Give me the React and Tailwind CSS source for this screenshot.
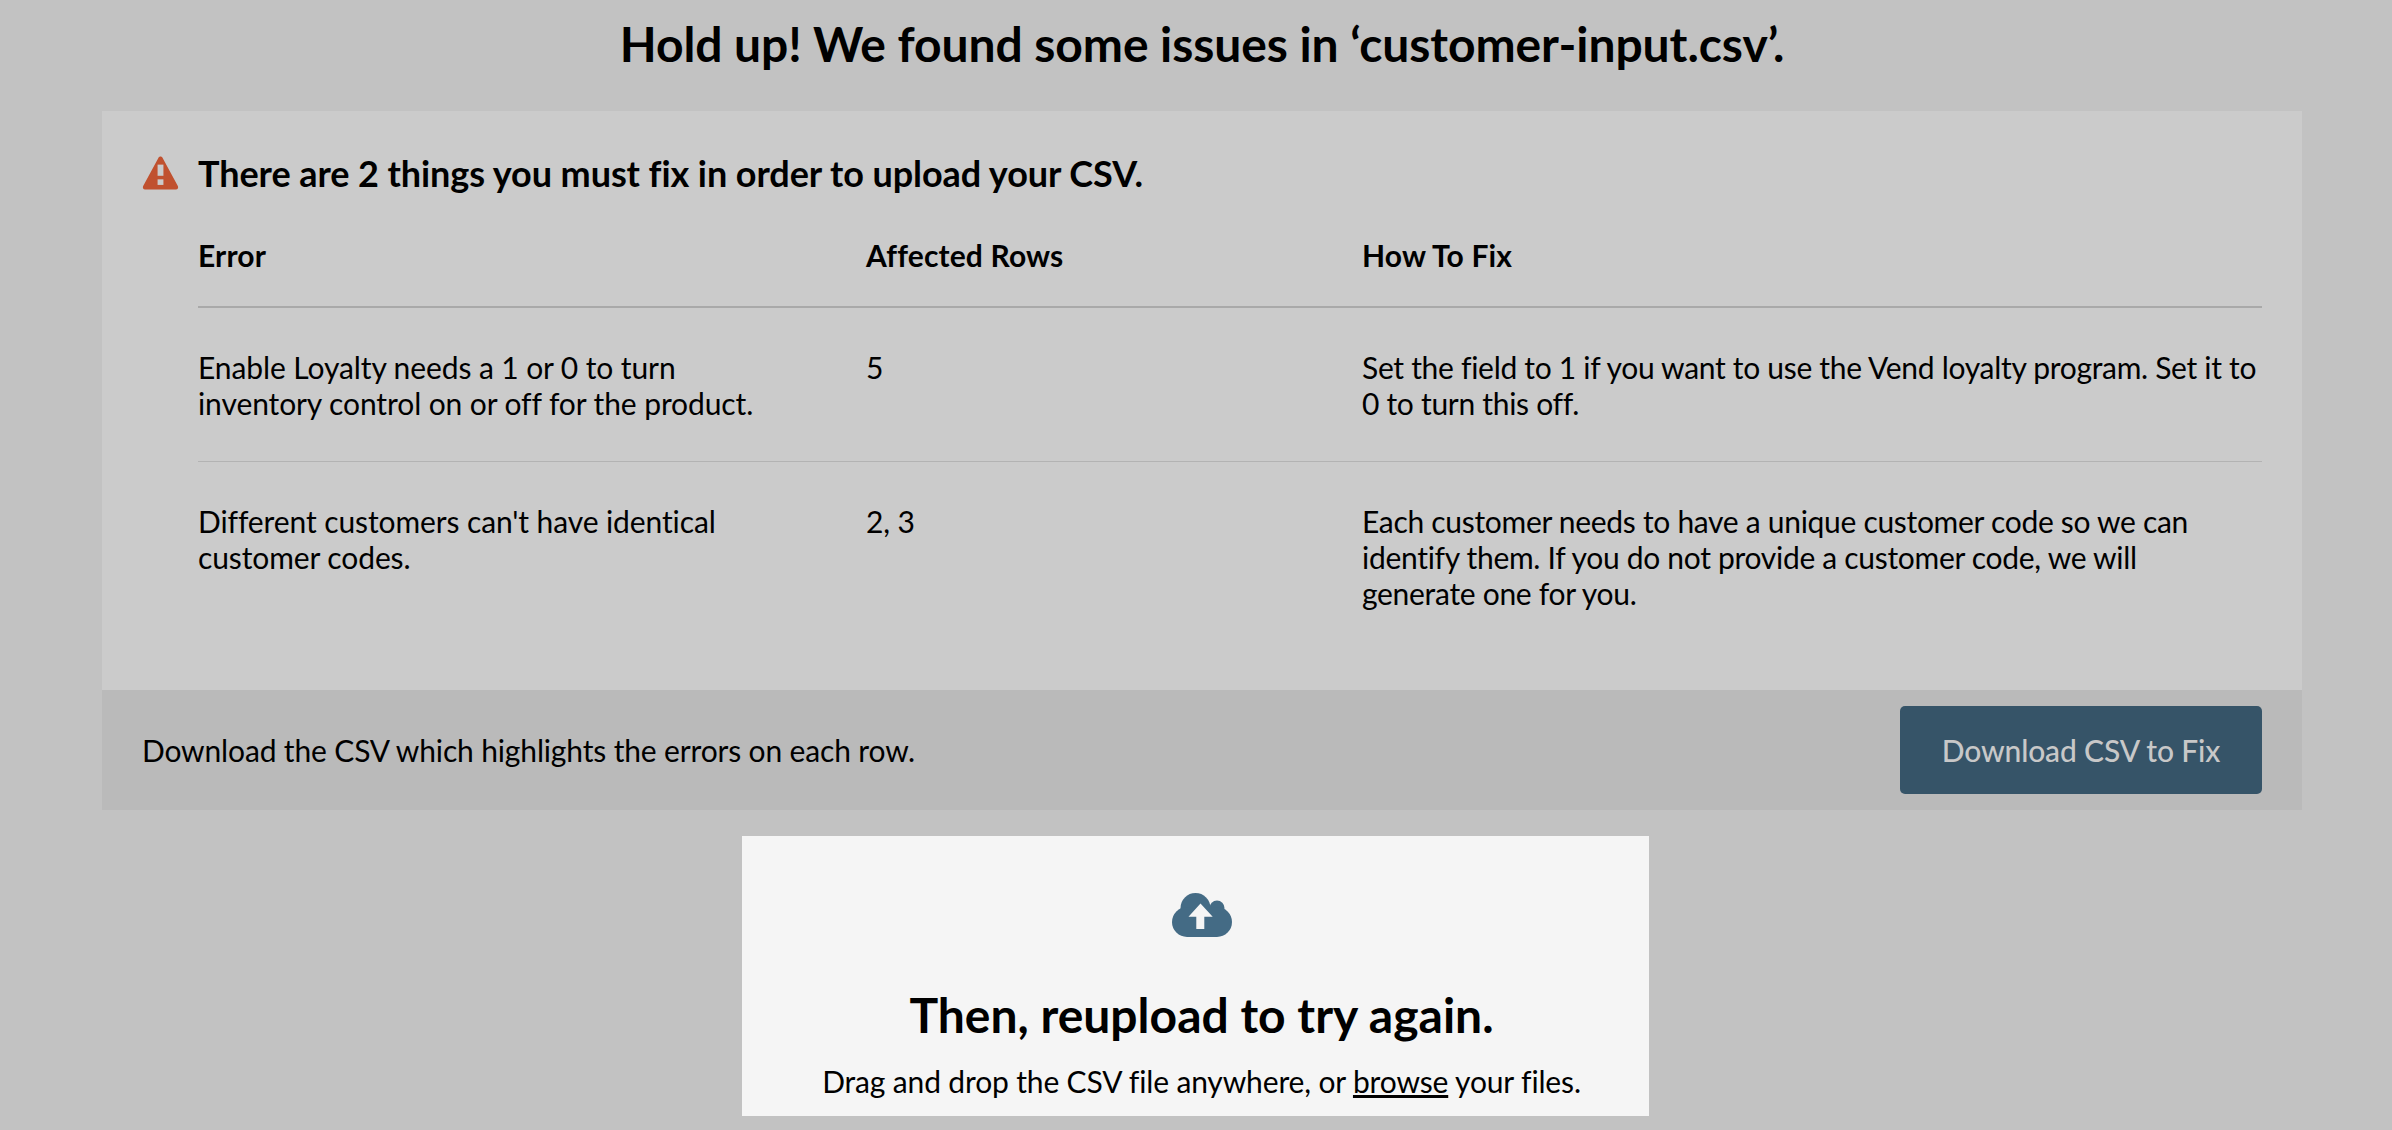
export default function App() {
  const rows = [
    {
      error: "Enable Loyalty needs a 1 or 0 to turn inventory control on or off for the product.",
      affected: "5",
      fix: "Set the field to 1 if you want to use the Vend loyalty program. Set it to 0 to turn this off.",
    },
    {
      error: "Different customers can't have identical customer codes.",
      affected: "2, 3",
      fix: "Each customer needs to have a unique customer code so we can identify them. If you do not provide a customer code, we will generate one for you.",
    },
  ];

  return (
    <div className="h-[1130px] overflow-hidden bg-[#c2c2c2] text-black font-['Lato',sans-serif] [font-variant-ligatures:common-ligatures]">
      <h1 className="ml-[12px] pt-[17px] text-center text-[48px] leading-[54px] font-bold tracking-[-0.07px]">
        Hold up! We found some issues in ‘customer-input.csv’.
      </h1>

      <div className="ml-[102px] mr-[90px] mt-[40px] bg-[#cbcbcb]">
        <div className="px-10 pt-[40px] pb-[79px]">
          <div className="flex items-center gap-[19px]">
            <svg width="37" height="34" viewBox="0 1 38 33.5" preserveAspectRatio="none" className="shrink-0">
              <path d="M19 1.5c1 0 1.7.6 2.2 1.4l15.6 27.6c.9 1.7-.2 3.5-2 3.5H3.2c-1.8 0-2.9-1.8-2-3.5L16.8 2.9c.5-.8 1.2-1.4 2.2-1.4z" fill="#c0512f" />
              <rect x="16" y="9.5" width="6" height="11" fill="#cbcbcb" />
              <rect x="16" y="24" width="6" height="5.5" fill="#cbcbcb" />
            </svg>
            <h2 className="text-[36px] leading-[44px] font-bold tracking-[-0.08px]">
              There are 2 things you must fix in order to upload your CSV.
            </h2>
          </div>

          <div className="ml-[56px]">
            <div className="grid grid-cols-[668px_496px_1fr] border-b-2 border-[#a9a9a9] pt-[42px] pb-[33px] text-[30px] leading-[36px] font-bold tracking-[0.15px]">
              <div>Error</div>
              <div>Affected Rows</div>
              <div>How To Fix</div>
            </div>
            {rows.map((row, i) => (
              <div
                key={i}
                className={`grid grid-cols-[668px_496px_1fr] pt-[41px] text-[30px] leading-[36px] tracking-[-0.1px] ${i === 0 ? "pb-[40px] border-b border-[#b3b3b3]" : ""}`}
              >
                <div className="pr-[80px]">{row.error}</div>
                <div>{row.affected}</div>
                <div className={`tracking-[-0.3px] ${i === 1 ? "pr-5" : ""}`}>{row.fix}</div>
              </div>
            ))}
          </div>
        </div>

        <div className="flex h-[120px] items-center justify-between bg-[#bababa] pl-10 pr-10">
          <p className="text-[30px] leading-[36px] tracking-[-0.15px]">
            Download the CSV which highlights the errors on each row.
          </p>
          <button className="h-[88px] w-[362px] rounded-[5px] bg-[#365468] text-[30px] font-medium tracking-[-0.15px] text-[#c8c8c8]">
            Download CSV to Fix
          </button>
        </div>
      </div>

      <div className="ml-[742px] mt-[26px] flex h-[280px] w-[907px] flex-col items-center bg-[#f5f5f5] pl-[12px] pt-[57px]">
        <svg width="60" height="44" viewBox="0 0 60 44">
          <g fill="#446b85">
            <circle cx="23.5" cy="15" r="15" />
            <circle cx="45" cy="15" r="7.5" />
            <circle cx="15" cy="29" r="15" />
            <circle cx="45" cy="29" r="15" />
            <rect x="15" y="20" width="30" height="24" />
          </g>
          <path d="M28.5 10.5 40.7 23.7H32.3V36H24.3V23.7H16.5z" fill="#f5f5f5" />
        </svg>
        <h2 className="mt-[49px] text-[48px] leading-[58px] font-bold">
          Then, reupload to try again.
        </h2>
        <p className="mt-[19px] text-[30px] leading-[36px] tracking-[-0.15px]">
          Drag and drop the CSV file anywhere, or <span className="underline">browse</span> your files.
        </p>
      </div>
    </div>
  );
}
